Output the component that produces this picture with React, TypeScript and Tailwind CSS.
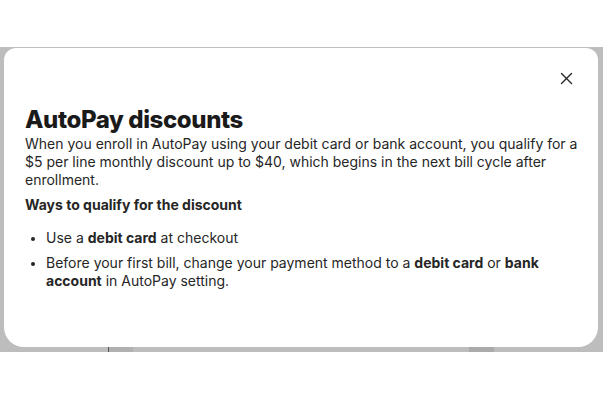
import React from 'react';

const CloseIcon = () => (
    <svg width="13" height="13" viewBox="0 0 13 13" fill="none" stroke="#262626" strokeWidth="1.4" strokeLinecap="round">
        <path d="M1.5 1.5 L11.5 11.5 M11.5 1.5 L1.5 11.5" />
    </svg>
);

export default function App(): React.JSX.Element {
    return (
        <div className="flex h-[402px] w-[603px] flex-col overflow-hidden bg-white font-['Inter','Liberation_Sans',sans-serif] text-[#1f1f1f]">
            <div className="h-[47px] shrink-0" />
            <div className="relative h-[305px] shrink-0 bg-[#bdbdbd] pb-[5px] pl-1 pr-[5px] pt-px">
                {/* blurred page fragments behind the overlay */}
                <div className="absolute bottom-0 left-[108px] h-[5px] w-px bg-[#555]" />
                <div className="absolute bottom-0 left-[109px] h-[5px] w-[24px] bg-[#b0b0b0]" />
                <div className="absolute bottom-0 left-[469px] h-[5px] w-[25px] bg-[#aaaaaa]" />

                <div className="relative flex h-full flex-col rounded-b-[20px] rounded-t-[12px] bg-white pl-[21px] pr-[12px] pt-[56px]">
                    <button className="absolute right-[24px] top-[22px] flex h-[16px] w-[16px] items-center justify-center">
                        <CloseIcon />
                    </button>
                    <h1 className="text-[24px] font-extrabold leading-[31px] tracking-[-0.4px] text-[#1a1a1a]">
                        AutoPay discounts
                    </h1>
                    <p className="text-[14px] leading-[18px] text-[#262626]">
                        When you enroll in AutoPay using your debit card or bank account, you qualify for a $5 per line monthly discount up to $40, which begins in the next bill cycle after enrollment.
                    </p>
                    <h2 className="mt-[7px] text-[14px] font-bold leading-[18px] text-[#262626]">
                        Ways to qualify for the discount
                    </h2>
                    <ul className="mt-[15px] flex list-disc flex-col gap-[7px] pl-[21px] pr-[40px] text-[14px] leading-[18px] text-[#262626] marker:text-[12px]">
                        <li>
                            Use a <b className="font-bold">debit card</b> at checkout
                        </li>
                        <li>
                            Before your first bill, change your payment method to a{' '}
                            <b className="font-bold">debit card</b> or{' '}
                            <b className="font-bold">bank account</b> in AutoPay setting.
                        </li>
                    </ul>
                </div>
            </div>
        </div>
    );
}
